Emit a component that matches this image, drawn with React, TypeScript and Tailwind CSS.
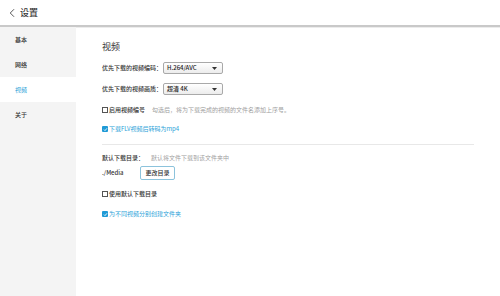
import { ChevronLeft } from 'lucide-react';

const font = { fontFamily: '"Noto Sans CJK SC", "Liberation Sans", sans-serif' };

function Select({ value }: { value: string }) {
  return (
    <div className="ml-[1px] flex h-[12px] w-[60px] items-center justify-between rounded-[2px] border border-[#a9a9a9] bg-gradient-to-b from-white to-[#ececec] pl-[3px] pr-[5px]">
      <span className="text-[6px] font-medium leading-none text-[#222]">{value}</span>
      <svg width="5" height="3" viewBox="0 0 5 3">
        <path d="M0 0h5L2.5 3z" fill="#333" />
      </svg>
    </div>
  );
}

function Check({ checked, label, hint }: { checked?: boolean; label: string; hint?: string }) {
  return (
    <div className="flex h-[10px] items-center">
      {checked ? (
        <span className="flex h-[6px] w-[6px] items-center justify-center rounded-[1px] bg-[#1f9ad6]">
          <svg width="5" height="5" viewBox="0 0 5 5">
            <path d="M1 2.6l1 1L4 1.3" stroke="#fff" strokeWidth="0.9" fill="none" />
          </svg>
        </span>
      ) : (
        <span className="h-[6px] w-[6px] border border-[#555] bg-white" />
      )}
      <span className={`ml-[1px] text-[6px] leading-none ${checked ? 'text-[#2a9fd8]' : 'font-medium text-[#333]'}`}>{label}</span>
      {hint && <span className="ml-[7px] text-[6px] leading-none text-[#a0a0a0]">{hint}</span>}
    </div>
  );
}

export default function App() {
  const nav = ['基本', '网络', '视频', '关于'];
  return (
    <div className="flex h-[296px] w-[500px] flex-col overflow-hidden bg-white" style={font}>
      <div className="flex h-[25px] items-center pl-[5px]">
        <ChevronLeft size={14} strokeWidth={1.4} color="#333" />
        <span className="ml-[1px] text-[9px] font-medium text-[#333]">设置</span>
      </div>
      <div className="h-[2px] bg-[#c9c9c9]" />
      <div className="h-[1px] bg-[#ececec]" />
      <div className="flex flex-1">
        <div className="w-[76px] bg-[#f4f4f4] -mt-[1px]">
          {nav.map((n) => (
            <div
              key={n}
              className={`flex h-[25px] items-center pl-[15px] text-[6px] ${n === '视频' ? 'bg-white text-[#2a9fd8]' : 'font-medium text-[#333]'}`}
            >
              {n}
            </div>
          ))}
        </div>
        <div className="flex-1 pl-[26px] pr-[26px] pt-[12px]">
          <div className="flex h-[14px] items-center text-[9px] text-[#333]">视频</div>
          <div className="mt-[8px] flex h-[12px] items-center">
            <span className="text-[6px] font-medium leading-none text-[#333]">优先下载的视频编码：</span>
            <Select value="H.264/AVC" />
          </div>
          <div className="mt-[9px] flex h-[12px] items-center">
            <span className="text-[6px] font-medium leading-none text-[#333]">优先下载的视频画质：</span>
            <Select value="超清 4K" />
          </div>
          <div className="mt-[10px]">
            <Check label="启用视频编号" hint="勾选后，将为下载完成的视频的文件名添加上序号。" />
          </div>
          <div className="mt-[9px]">
            <Check checked label="下载FLV视频后转码为mp4" />
          </div>
          <div className="mt-[10px] h-[1px] bg-[#e8e8e8]" />
          <div className="mt-[8px] flex h-[10px] items-center">
            <span className="text-[6px] font-medium leading-none text-[#333]">默认下载目录：</span>
            <span className="ml-[7px] text-[6px] leading-none text-[#a0a0a0]">默认将文件下载到该文件夹中</span>
          </div>
          <div className="mt-[3px] flex h-[14px] items-center">
            <span className="w-[38px] text-[6px] font-medium leading-none text-[#333]">./Media</span>
            <button className="flex h-[14px] w-[35px] items-center justify-center rounded-[2px] border border-[#8cc3dc] bg-white text-[6px] font-medium leading-none text-[#333]">
              更改目录
            </button>
          </div>
          <div className="mt-[9px]">
            <Check label="使用默认下载目录" />
          </div>
          <div className="mt-[10px]">
            <Check checked label="为不同视频分别创建文件夹" />
          </div>
        </div>
      </div>
    </div>
  );
}
